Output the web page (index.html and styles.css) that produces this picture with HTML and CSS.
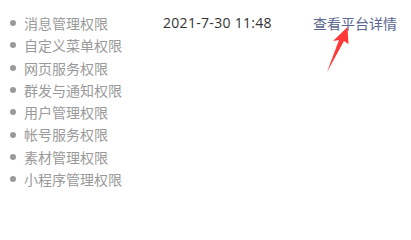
FILE: index.html
```html
<!DOCTYPE html>
<html lang="zh-CN">
<head>
<meta charset="utf-8">
<link rel="stylesheet" href="styles.css">
</head>
<body>
<div class="row">
  <ul class="perms">
    <li>消息管理权限</li>
    <li>自定义菜单权限</li>
    <li>网页服务权限</li>
    <li>群发与通知权限</li>
    <li>用户管理权限</li>
    <li>帐号服务权限</li>
    <li>素材管理权限</li>
    <li>小程序管理权限</li>
  </ul>
  <div class="date">2021-7-30 11:48</div>
  <div class="action">
    <a class="link" href="#">查看平台详情</a>
    <svg class="arrow" width="30" height="50" viewBox="0 0 30 50">
      <polygon points="20.5,0 21.5,17 17,14 0,45 12,13 6,14" fill="#ff3838"/>
    </svg>
  </div>
</div>
</body>
</html>
```
FILE: styles.css
```css
html, body {
  margin: 0;
  padding: 0;
  background: #ffffff;
}
body {
  font-family: "Noto Sans CJK SC", "Noto Sans", sans-serif;
  font-size: 14px;
}
.row {
  display: flex;
  align-items: flex-start;
  padding-top: 12px;
}
.perms {
  list-style: none;
  margin: 0;
  padding: 0 0 0 10px;
  width: 153px;
}
.perms li {
  display: flex;
  align-items: center;
  gap: 8px;
  height: 22.3px;
  line-height: 22.3px;
  color: #9a9a9a;
  white-space: nowrap;
}
.perms li::before {
  content: "";
  width: 6px;
  height: 6px;
  border-radius: 50%;
  background: #999999;
  flex: none;
}
.date {
  width: 150px;
  line-height: 22.3px;
  color: #333333;
  letter-spacing: 0.3px;
  font-family: "Open Sans", "Noto Sans CJK SC", sans-serif;
}
.action {
  position: relative;
}
.link {
  display: block;
  line-height: 22.3px;
  color: #5a6690;
  text-decoration: none;
  white-space: nowrap;
}
.arrow {
  position: absolute;
  left: 14px;
  top: 15px;
}
```
